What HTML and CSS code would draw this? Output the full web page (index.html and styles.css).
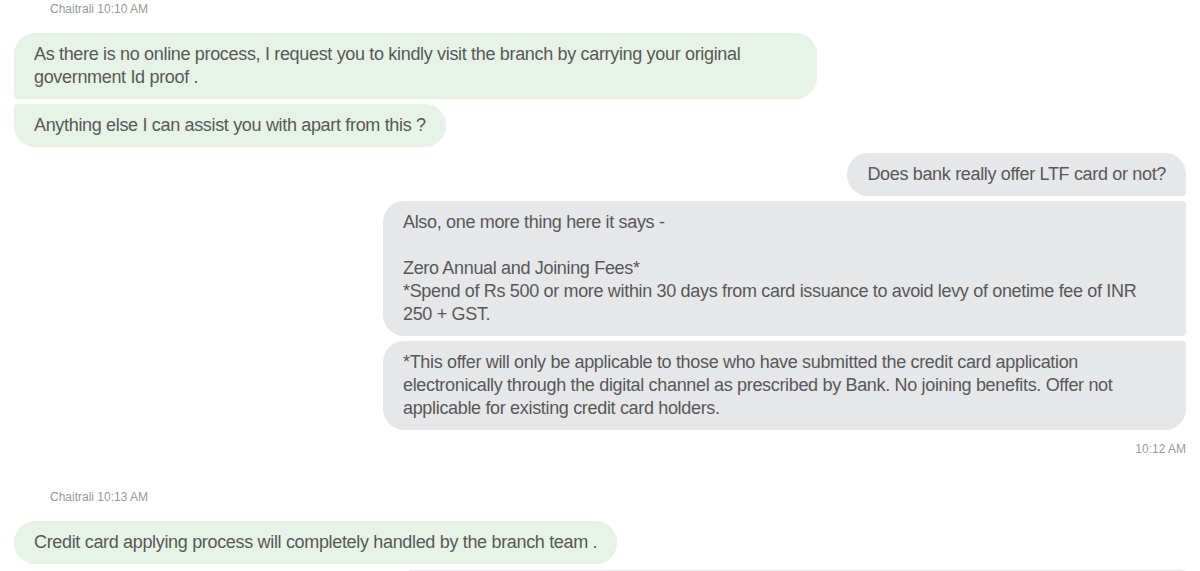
FILE: index.html
```html
<!DOCTYPE html>
<html lang="en">
<head>
    <meta charset="UTF-8">
    <meta name="viewport" content="width=device-width, initial-scale=1.0">
    <title>Chat</title>
    <link rel="stylesheet" href="styles.css">
</head>
<body>
    <div class="chat">
        <div class="group incoming">
            <div class="meta">Chaitrali 10:10 AM</div>
            <div class="bubble first">As there is no online process, I request you to kindly visit the branch by carrying your original government Id proof .</div>
            <div class="bubble last">Anything else I can assist you with apart from this ?</div>
        </div>

        <div class="group outgoing">
            <div class="bubble first">Does bank really offer LTF card or not?</div>
            <div class="bubble middle">Also, one more thing here it says -<br><br>Zero Annual and Joining Fees*<br>*Spend of Rs 500 or more within 30 days from card issuance to avoid levy of onetime fee of INR 250 + GST.</div>
            <div class="bubble last">*This offer will only be applicable to those who have submitted the credit card application electronically through the digital channel as prescribed by Bank. No joining benefits. Offer not applicable for existing credit card holders.</div>
            <div class="time">10:12 AM</div>
        </div>

        <div class="group incoming spaced">
            <div class="meta">Chaitrali 10:13 AM</div>
            <div class="bubble">Credit card applying process will completely handled by the branch team .</div>
        </div>

        <div class="group outgoing">
            <div class="bubble first cut">&nbsp;</div>
        </div>
    </div>
</body>
</html>
```

FILE: styles.css
```css
body {
    margin: 0;
    background: #fff;
    font-family: "Liberation Sans", Arial, sans-serif;
    color: #585858;
    overflow: hidden;
}
.chat {
    padding: 0 14px;
    display: flex;
    flex-direction: column;
    gap: 6px;
}
.group {
    display: flex;
    flex-direction: column;
    gap: 5px;
}
.incoming {
    align-items: flex-start;
}
.outgoing {
    align-items: flex-end;
}
.spaced {
    margin-top: 24px;
}
.meta, .time {
    font-size: 12px;
    line-height: 18px;
    color: #999;
}
.meta {
    margin-left: 36px;
    margin-bottom: 10px;
}
.time {
    margin-top: 5px;
}
.bubble {
    max-width: 763px;
    padding: 10px 20px;
    font-size: 18px;
    line-height: 23px;
    letter-spacing: -0.33px;
    border-radius: 21px;
}
.incoming .bubble {
    background: #e8f3e7;
}
.outgoing .bubble {
    background: #e6e7e9;
}
.incoming .first {
    border-bottom-left-radius: 4px;
}
.incoming .last {
    border-top-left-radius: 4px;
}
.outgoing .first {
    border-bottom-right-radius: 4px;
}
.outgoing .middle {
    border-top-right-radius: 4px;
    border-bottom-right-radius: 4px;
}
.outgoing .last {
    border-top-right-radius: 4px;
}
.cut {
    width: 739px;
    background: #eceef0;
    border-radius: 4px;
}
```
